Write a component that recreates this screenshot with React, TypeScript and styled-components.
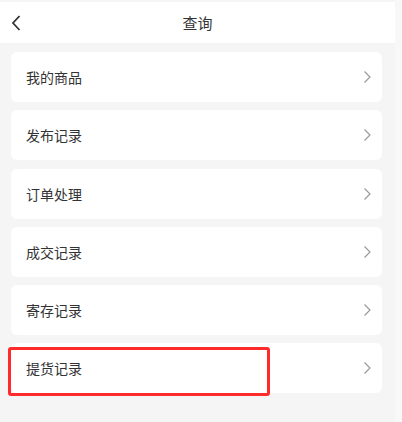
import styled, { createGlobalStyle } from 'styled-components'

const GlobalStyle = createGlobalStyle`
  html, body {
    margin: 0;
    padding: 0;
    background: #f8f8f8;
  }
  body {
    font-family: "Noto Sans CJK SC", "Noto Sans", sans-serif;
  }
`

const Page = styled.div`
  width: 395px;
  min-height: 422px;
  background: #f5f5f5;
  padding-top: 2px;
  box-sizing: border-box;
`

const Header = styled.div`
  position: relative;
  height: 41px;
  background: #ffffff;
  display: flex;
  align-items: center;
  justify-content: center;
`

const BackButton = styled.button`
  position: absolute;
  left: 9px;
  top: 12px;
  width: 14px;
  height: 18px;
  padding: 0;
  border: none;
  background: none;
  display: flex;
  align-items: center;
  justify-content: center;
  cursor: pointer;
`

const Title = styled.h1`
  margin: 0;
  font-size: 15px;
  font-weight: 400;
  color: #333333;
`

const List = styled.div`
  display: flex;
  flex-direction: column;
  gap: 8.3px;
  padding: 9px 13px 0 11px;
`

const Card = styled.div`
  position: relative;
  height: 50px;
  background: #ffffff;
  border-radius: 6px;
  display: flex;
  align-items: center;
  justify-content: space-between;
  padding: 0 10px 0 15px;
  box-sizing: border-box;
  cursor: pointer;
`

const Label = styled.span`
  font-size: 14px;
  color: #333333;
  line-height: 1;
`

const Highlight = styled.div`
  position: absolute;
  left: -3px;
  top: 4px;
  width: 262px;
  height: 49px;
  border: 3px solid #ff2b2b;
  border-radius: 3px;
  box-sizing: border-box;
  pointer-events: none;
`

const Chevron = () => (
  <svg width="10" height="14" viewBox="0 0 10 14">
    <polyline points="2.5,1.5 8,7 2.5,12.5" fill="none" stroke="#9a9a9a" strokeWidth="1.2" />
  </svg>
)

const items = ['我的商品', '发布记录', '订单处理', '成交记录', '寄存记录', '提货记录']

export default function App() {
  return (
    <>
      <GlobalStyle />
      <Page>
        <Header>
          <BackButton aria-label="返回">
            <svg width="10" height="16" viewBox="0 0 10 16">
              <polyline points="8.5,1 2,8 8.5,15" fill="none" stroke="#333333" strokeWidth="1.8" />
            </svg>
          </BackButton>
          <Title>查询</Title>
        </Header>
        <List>
          {items.map((item, i) => (
            <Card key={item}>
              <Label>{item}</Label>
              <Chevron />
              {i === items.length - 1 && <Highlight />}
            </Card>
          ))}
        </List>
      </Page>
    </>
  )
}
